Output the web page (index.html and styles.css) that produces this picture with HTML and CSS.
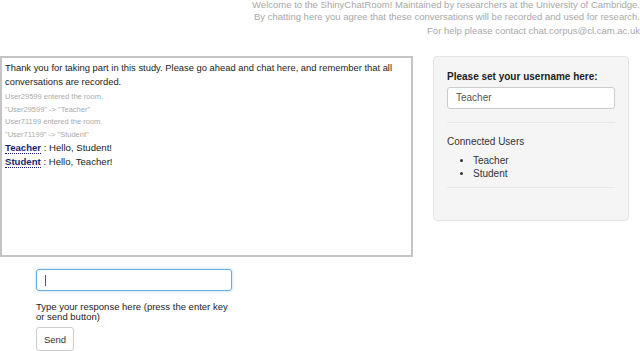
FILE: index.html
```html
<!DOCTYPE html>
<html lang="en">

<head>
    <meta charset="UTF-8">
    <meta name="viewport" content="width=device-width, initial-scale=1.0">
    <title>ShinyChatRoom</title>
    <link rel="stylesheet" href="styles.css">
</head>

<body>
    <div class="intro">
        <div>Welcome to the ShinyChatRoom! Maintained by researchers at the University of Cambridge.</div>
        <div>By chatting here you agree that these conversations will be recorded and used for research.</div>
        <div class="contact">For help please contact chat.corpus@cl.cam.ac.uk</div>
    </div>

    <div class="main">
        <div class="chat" id="chat">
            <div class="notice">Thank you for taking part in this study. Please go ahead and chat here, and remember that all conversations are recorded.</div>
            <div class="event">User29599 entered the room.</div>
            <div class="event">"User29599" -&gt; "Teacher"</div>
            <div class="event">User71199 entered the room.</div>
            <div class="event">"User71199" -&gt; "Student"</div>
            <div class="msg"><span class="who">Teacher</span> : Hello, Student!</div>
            <div class="msg"><span class="who">Student</span> : Hello, Teacher!</div>
        </div>

        <div class="well">
            <label class="user-label">Please set your username here:</label>
            <div class="field">Teacher</div>
            <hr>
            <div class="users-title">Connected Users</div>
            <ul class="users">
                <li>Teacher</li>
                <li>Student</li>
            </ul>
            <hr>
        </div>
    </div>

    <div class="compose">
        <div class="entry"><span class="caret"></span></div>
        <div class="hint">Type your response here (press the enter key or send button)</div>
        <button class="send">Send</button>
    </div>
</body>

</html>
```

FILE: styles.css
```css
body {
    margin: 0;
    font-family: "Liberation Sans", Arial, sans-serif;
    font-size: 10px;
    color: #333333;
    background: #ffffff;
}

.intro {
    text-align: right;
    color: #a8a8a8;
    font-size: 9.5px;
    line-height: 12px;
    margin-top: -1px;
}

.intro .contact {
    margin-top: 2px;
}

.main {
    display: flex;
    align-items: flex-start;
    margin-top: 19px;
}

.chat {
    width: 406px;
    height: 194px;
    border: 2px solid #c4c4c4;
    padding: 3px 0 0 3px;
    color: #222222;
}

.notice {
    font-size: 9.4px;
    line-height: 14px;
    margin-bottom: 2px;
}

.event {
    font-size: 7.5px;
    line-height: 12.5px;
    color: #aaaaaa;
}

.msg {
    font-size: 9.6px;
    line-height: 14px;
}

.who {
    font-weight: bold;
    color: #1c1c6e;
    border-bottom: 1px dotted #1c1c6e;
}

.well {
    margin-left: 20px;
    width: 168px;
    height: 150px;
    padding: 13px 13px 0 13px;
    background: #f5f5f5;
    border: 1px solid #e3e3e3;
    border-radius: 4px;
}

.user-label {
    display: block;
    font-weight: bold;
    color: #222222;
    line-height: 14px;
}

.field {
    margin-top: 3px;
    height: 20px;
    line-height: 20px;
    padding-left: 8px;
    background: #ffffff;
    border: 1px solid #cccccc;
    border-radius: 3px;
    color: #555555;
}

.well hr {
    border: 0;
    border-top: 1px solid #e8e8e8;
    margin: 13px 0 0 0;
}

.users-title {
    margin-top: 13px;
    line-height: 12px;
}

.users {
    margin: 6px 0 0 0;
    padding-left: 26px;
    line-height: 13px;
}

.users + hr {
    margin-top: 7px;
}

.compose {
    padding: 12px 0 0 36px;
    width: 196px;
}

.entry {
    height: 20px;
    border: 1px solid #66afe9;
    border-radius: 3px;
    box-shadow: 0 0 3px rgba(102, 175, 233, 0.6);
    display: flex;
    align-items: center;
    padding-left: 8px;
}

.caret {
    width: 1px;
    height: 11px;
    background: #555555;
}

.hint {
    margin-top: 11px;
    line-height: 10px;
    font-size: 9.5px;
    color: #222222;
}

.send {
    margin-top: 5px;
    font-family: "Liberation Sans", Arial, sans-serif;
    font-size: 9.5px;
    color: #333333;
    background: #ffffff;
    border: 1px solid #cccccc;
    border-radius: 3px;
    width: 38px;
    height: 24px;
    padding: 0;
}
```
